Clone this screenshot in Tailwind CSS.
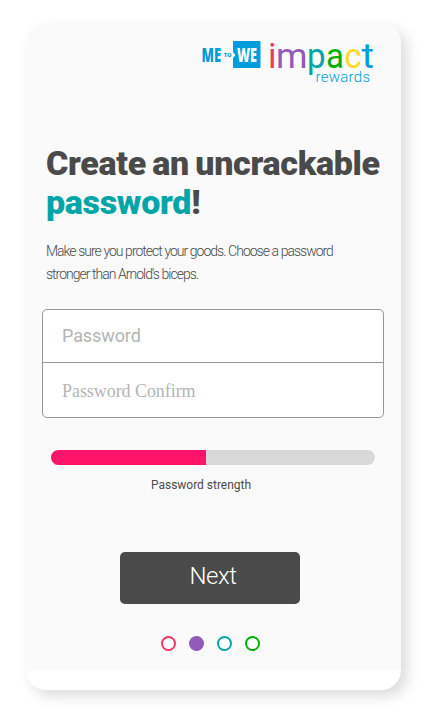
<!DOCTYPE html>
<html lang="en">
<head>
  <meta charset="UTF-8" />
  <meta name="viewport" content="width=device-width, initial-scale=1.0"/>
  <title>ME to WE Impact Rewards</title>
  <script src="https://cdn.jsdelivr.net/npm/@tailwindcss/browser@4"></script>
</head>
<body class="bg-white h-[716px] overflow-hidden pt-[23px] pl-[26px] font-['Roboto',sans-serif] text-[#4a4a4a]">
  <div class="w-[375px] h-[667px] bg-white rounded-[20px] overflow-hidden shadow-[6px_6px_14px_rgba(0,0,0,0.14)]">
    <main class="h-[648px] bg-[#fafafa] flex flex-col">

      <!-- Logo -->
      <header class="flex justify-end pt-[17px] pr-[26px]">
        <svg class="w-[174px] h-[46px] overflow-visible" viewBox="0 0 174 46" font-family="Roboto, sans-serif">
          <text x="0.500" y="21.500" font-family="Open Sans, sans-serif" font-size="19" font-weight="800" fill="#009ddc" textLength="19.500" lengthAdjust="spacingAndGlyphs">ME</text>
          <text x="22.500" y="17" font-size="5.500" font-weight="900" fill="#009ddc" textLength="8" lengthAdjust="spacingAndGlyphs">TO</text>
          <path d="M33 1h25.500a1 1 0 0 1 1 1v25a1 1 0 0 1-1 1H33a1 1 0 0 1-1-1V18l2.500-3-2.500-3V2a1 1 0 0 1 1-1z" fill="#009ddc"/>
          <text x="36" y="21.500" font-family="Open Sans, sans-serif" font-size="19" font-weight="800" fill="#fff" textLength="20" lengthAdjust="spacingAndGlyphs">WE</text>
          <g font-size="35">
            <text x="67" y="28" fill="#f0385f">i</text>
            <text x="75" y="28" fill="#9159b8" textLength="31.500" lengthAdjust="spacingAndGlyphs">m</text>
            <text x="106" y="28" fill="#00a5a8" textLength="18.500" lengthAdjust="spacingAndGlyphs">p</text>
            <text x="125" y="28" fill="#00ae00" textLength="18" lengthAdjust="spacingAndGlyphs">a</text>
            <text x="143.500" y="28" fill="#ffdc29" textLength="17" lengthAdjust="spacingAndGlyphs">c</text>
            <text x="160.500" y="28" fill="#009ddc" textLength="12.500" lengthAdjust="spacingAndGlyphs">t</text>
          </g>
          <text x="114.500" y="41.500" font-size="15" font-weight="300" fill="#009ddc" textLength="54.500">rewards</text>
        </svg>
      </header>

      <!-- Heading -->
      <section class="pl-5 pt-[58px] whitespace-nowrap">
        <h1 class="text-[34px] leading-[39px] font-black tracking-[-0.3px] [word-spacing:-1.8px]">Create an uncrackable<br><span class="text-[#00a5a8]">password</span>!</h1>
        <p class="mt-[18px] text-[14px] leading-[23px] font-[350] tracking-[-1px] [word-spacing:0.2px]">Make sure you protect your goods. Choose a password<br>stronger than Arnold's biceps.</p>
      </section>

      <!-- Inputs -->
      <form class="mt-[23px] ml-4 w-[342px] h-[109px] border border-[#979797] rounded-[5px] bg-white flex flex-col overflow-hidden">
        <input type="text" placeholder="Password" class="h-[53px] px-[19px] pb-[2px] border-b border-[#979797] text-[18px] tracking-[-0.1px] placeholder:text-[#b5b5b5] outline-none" />
        <input type="text" placeholder="Password Confirm" class="grow px-[19px] pt-[3px] font-['Liberation_Serif',serif] text-[18px] tracking-[-0.06px] placeholder:text-[#b5b5b5] outline-none" />
      </form>

      <!-- Strength meter -->
      <div class="mt-8 ml-[25px] w-[324px] h-[15px] rounded-full bg-[#d8d8d8] overflow-hidden">
        <div class="h-full w-[155px] bg-[#ff146c]"></div>
      </div>
      <p class="mt-3 ml-[125px] text-[12px] leading-4 tracking-[-0.02px]">Password strength</p>

      <!-- Next -->
      <button type="button" class="mt-[59px] ml-[94px] w-[180px] h-[52px] rounded-[5px] bg-[#4a4a4a] text-white text-[24px] font-light tracking-[-0.5px] pl-[6px] pb-1">Next</button>

      <!-- Step dots -->
      <nav class="mt-8 ml-[135px] flex gap-[13px]">
        <span class="size-[15px] rounded-full border-2 border-[#f0385f] bg-white"></span>
        <span class="size-[15px] rounded-full bg-[#9159b8]"></span>
        <span class="size-[15px] rounded-full border-2 border-[#00a5a8] bg-white"></span>
        <span class="size-[15px] rounded-full border-2 border-[#00ae00] bg-white"></span>
      </nav>
    </main>
  </div>
</body>
</html>
